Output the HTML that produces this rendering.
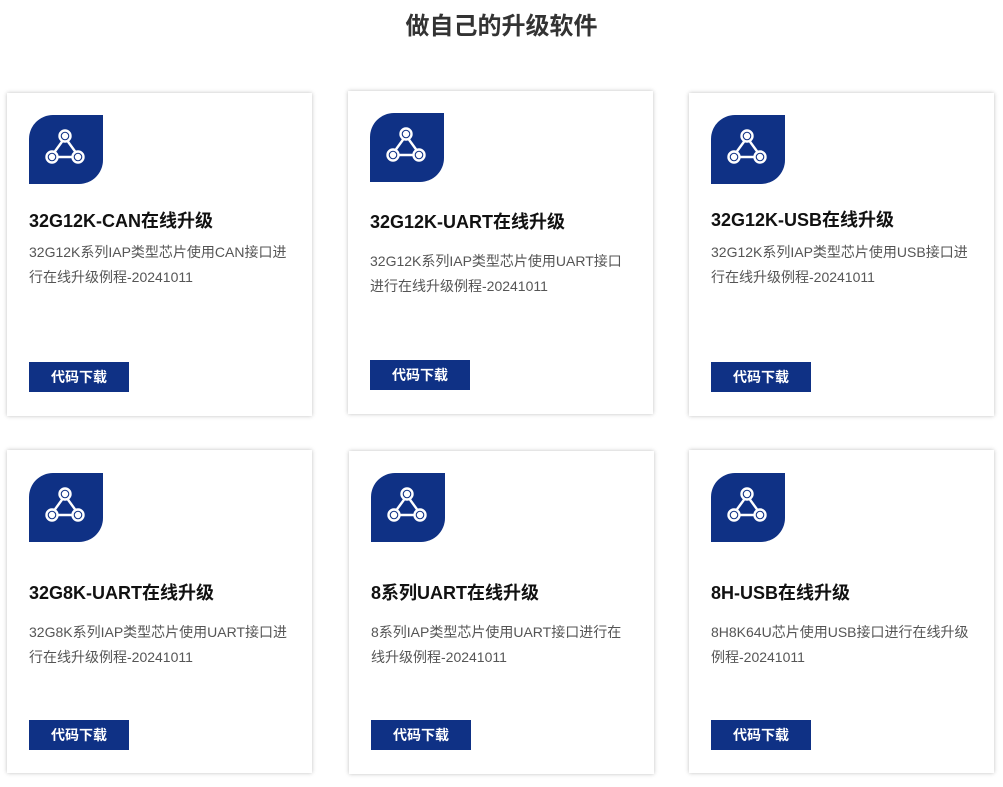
<!DOCTYPE html>
<html><head><meta charset="utf-8"><style>
body{margin:0;width:1003px;height:787px;background:#fff;font-family:"Liberation Sans","Noto Sans CJK SC",sans-serif;position:relative;overflow:hidden}
h1{position:absolute;top:10px;left:0;width:1003px;text-align:center;margin:0;font-size:24px;font-weight:bold;color:#333;line-height:34px}
.card{position:absolute;width:305px;height:323px;background:#fff;box-shadow:0 0 4px rgba(0,0,0,.25)}
.ic{position:absolute;left:22px;width:74px;height:69px;background:#0f3185;border-radius:24px 0 24px 0}
.ic svg{position:absolute;left:0;top:0}
.t{position:absolute;left:22px;font-size:18px;font-weight:bold;color:#111;white-space:nowrap;line-height:24px}
.d{position:absolute;left:22px;width:262px;font-size:14px;color:#555;line-height:25px}
.b{position:absolute;left:22px;width:100px;height:30px;background:#0f3185;color:#fff;font-size:14px;font-weight:bold;text-align:center;line-height:30px}
</style></head><body>
<h1>做自己的升级软件</h1>
<svg width="0" height="0" style="position:absolute"><defs><g id="g" fill="none" stroke="#fff" stroke-width="2.4"><circle cx="36" cy="21" r="5.5"/><circle cx="23" cy="42" r="5.5"/><circle cx="49" cy="42" r="5.5"/><path d="M33.5 26 L25.5 37 M38.5 26 L46.5 37 M28.5 42 H43.5"/><circle cx="36" cy="21" r="2" fill="#fff"/><circle cx="23" cy="42" r="2" fill="#fff"/><circle cx="49" cy="42" r="2" fill="#fff"/></g></defs></svg>

<div class="card" style="left:7px;top:93px">
<div class="ic" style="top:22px"><svg width="74" height="69"><use href="#g"/></svg></div>
<div class="t" style="top:116px">32G12K-CAN在线升级</div>
<div class="d" style="top:147px">32G12K系列IAP类型芯片使用CAN接口进行在线升级例程-20241011</div>
<div class="b" style="top:269px">代码下载</div></div>

<div class="card" style="left:348px;top:91px">
<div class="ic" style="top:22px"><svg width="74" height="69"><use href="#g"/></svg></div>
<div class="t" style="top:119px">32G12K-UART在线升级</div>
<div class="d" style="top:158px">32G12K系列IAP类型芯片使用UART接口进行在线升级例程-20241011</div>
<div class="b" style="top:269px">代码下载</div></div>

<div class="card" style="left:689px;top:93px">
<div class="ic" style="top:22px"><svg width="74" height="69"><use href="#g"/></svg></div>
<div class="t" style="top:115px">32G12K-USB在线升级</div>
<div class="d" style="top:147px">32G12K系列IAP类型芯片使用USB接口进行在线升级例程-20241011</div>
<div class="b" style="top:269px">代码下载</div></div>

<div class="card" style="left:7px;top:450px">
<div class="ic" style="top:23px"><svg width="74" height="69"><use href="#g"/></svg></div>
<div class="t" style="top:131px">32G8K-UART在线升级</div>
<div class="d" style="top:170px">32G8K系列IAP类型芯片使用UART接口进行在线升级例程-20241011</div>
<div class="b" style="top:270px">代码下载</div></div>

<div class="card" style="left:349px;top:451px">
<div class="ic" style="top:22px"><svg width="74" height="69"><use href="#g"/></svg></div>
<div class="t" style="top:130px">8系列UART在线升级</div>
<div class="d" style="top:169px">8系列IAP类型芯片使用UART接口进行在线升级例程-20241011</div>
<div class="b" style="top:269px">代码下载</div></div>

<div class="card" style="left:689px;top:450px">
<div class="ic" style="top:23px"><svg width="74" height="69"><use href="#g"/></svg></div>
<div class="t" style="top:131px">8H-USB在线升级</div>
<div class="d" style="top:170px">8H8K64U芯片使用USB接口进行在线升级例程-20241011</div>
<div class="b" style="top:270px">代码下载</div></div>
</body></html>
